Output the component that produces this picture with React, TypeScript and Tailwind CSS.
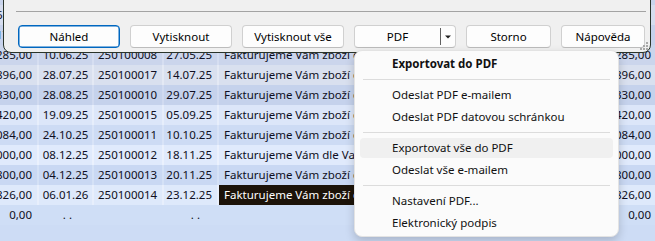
const rows = [
  { cell: '#c9d4ec', sep: '#d4ddf1', amt: '13 445,00', d1: '02.04.25', no: '250100005', d2: '19.03.25', text: 'Fakturujeme Vám zboží dle', r: '445,00' },
  { cell: '#d6ddee', sep: '#e2e8f4', amt: '23 610,00', d1: '06.05.25', no: '250100006', d2: '22.04.25', text: 'Fakturujeme Vám zboží dle', r: '610,00' },
  { cell: '#c7d2ec', sep: '#d2dbf0', amt: '43 173,00', d1: '30.05.25', no: '250100007', d2: '16.05.25', text: 'Fakturujeme Vám zboží dle', r: '173,00' },
  { cell: '#cbd5ec', sep: '#d6def1', amt: '12 285,00', d1: '10.06.25', no: '250100008', d2: '27.05.25', text: 'Fakturujeme Vám zboží dle', r: '285,00' },
  { cell: '#d9e0ef', sep: '#e4e9f4', amt: '12 896,00', d1: '28.07.25', no: '250100017', d2: '14.07.25', text: 'Fakturujeme Vám zboží dle', r: '896,00' },
  { cell: '#c5d2ec', sep: '#d0daf0', amt: '3 330,00', d1: '28.08.25', no: '250100010', d2: '29.07.25', text: 'Fakturujeme Vám zboží dle', r: '330,00' },
  { cell: '#dce6f9', sep: '#e7eefb', amt: '5 420,00', d1: '19.09.25', no: '250100015', d2: '05.09.25', text: 'Fakturujeme Vám zboží dle', r: '420,00' },
  { cell: '#cddbf4', sep: '#d8e3f7', amt: '7 084,00', d1: '24.10.25', no: '250100011', d2: '10.10.25', text: 'Fakturujeme Vám zboží dle', r: '084,00' },
  { cell: '#e0eafc', sep: '#ebf1fd', amt: '9 000,00', d1: '08.12.25', no: '250100012', d2: '18.11.25', text: 'Fakturujeme Vám dle Vaší objednávky', r: '000,00' },
  { cell: '#c9d8f3', sep: '#d4e1f6', amt: '4 800,00', d1: '04.12.25', no: '250100013', d2: '20.11.25', text: 'Fakturujeme Vám zboží dle', r: '800,00' },
  { cell: '#dee9fb', sep: '#e8effc', amt: '6 826,00', d1: '06.01.26', no: '250100014', d2: '23.12.25', text: 'Fakturujeme Vám zboží dle', r: '826,00', selected: true },
]

const buttons = [
  { label: 'Náhled', w: 'w-[102px]', focus: true },
  { label: 'Vytisknout', w: 'w-[102px]' },
  { label: 'Vytisknout vše', w: 'w-[102px]' },
]

function Sep() {
  return <div className="mx-2 my-1 h-px bg-[#dcdcdc]" />
}

function Item({ children, bold, hover }: { children: string; bold?: boolean; hover?: boolean }) {
  return (
    <div className="h-[22px] px-[5px] py-px">
      <div
        className={
          'h-[20px] rounded-[4px] pl-[32px] flex items-center ' +
          (hover ? 'bg-[#f0f0f0] ' : '') +
          (bold ? 'font-bold' : '')
        }
      >
        {children}
      </div>
    </div>
  )
}

export default function App() {
  return (
    <div className="relative w-[655px] h-[241px] overflow-hidden bg-[#cddcf5] font-['Noto_Sans',sans-serif] text-[11.5px] text-[#0f0f22]">
      {/* table behind */}
      <div className="flex flex-col mt-[-15px]">
        {rows.map((r, i) => (
          <div key={i} className="flex h-[20px] gap-[2px]" style={{ backgroundColor: r.sep }}>
            <div className="w-[37px] flex justify-end items-center overflow-hidden pr-[5px] whitespace-nowrap" style={{ backgroundColor: r.cell }}>
              {r.amt}
            </div>
            <div className="w-[53px] flex justify-center items-center whitespace-nowrap" style={{ backgroundColor: r.cell }}>
              {r.d1}
            </div>
            <div className="w-[68px] flex items-center pl-[4px] whitespace-nowrap" style={{ backgroundColor: r.cell }}>
              {r.no}
            </div>
            <div className="w-[53px] flex justify-end items-center pr-[5px] whitespace-nowrap" style={{ backgroundColor: r.cell }}>
              {r.d2}
            </div>
            <div
              className={'flex-1 flex items-center pl-[5px] whitespace-nowrap overflow-hidden ' + (r.selected ? 'bg-[#1c1309] text-white' : '')}
              style={{ backgroundColor: r.selected ? undefined : r.cell }}
            >
              {r.text}
            </div>
            <div className="w-[60px] flex justify-end items-center pr-[4px] whitespace-nowrap" style={{ backgroundColor: r.cell }}>
              {r.r}
            </div>
          </div>
        ))}
        {/* totals row */}
        <div className="flex h-[20px] bg-[#cfdef6]">
          <div className="w-[37px] flex justify-end items-center pr-[5px]">0,00</div>
          <div className="w-[35px] flex justify-end items-center">. .</div>
          <div className="w-[128px] flex justify-end items-center">. .</div>
          <div className="flex-1" />
          <div className="w-[60px] flex justify-end items-center pr-[4px]">0,00</div>
        </div>
      </div>

      {/* dialog */}
      <div className="absolute left-[3px] top-[-20px] w-[648px] h-[73px] bg-[#f0f0f0] border border-[#2a342a] rounded-b-[8px] flex flex-col">
        <div className="h-[30px]" />
        <div className="ml-[12px] mr-[4px] h-px bg-[#a3a3a3]" />
        <div className="mt-[13px] pl-[14px] flex gap-[10px] text-black">
          {buttons.map((b) => (
            <div
              key={b.label}
              className={
                b.w +
                ' h-[23px] rounded-[4px] flex items-center justify-center bg-[#fdfdfd] ' +
                (b.focus ? 'border border-[#0067c0] shadow-[inset_0_0_0_0.5px_#0067c0]' : 'border border-[#d0d0d0] border-b-[#bcbcbc]')
              }
            >
              {b.label}
            </div>
          ))}
          <div className="w-[102px] h-[23px] rounded-[4px] flex items-center bg-[#fdfdfd] border border-[#d0d0d0] border-b-[#bcbcbc]">
            <div className="flex-1 flex justify-center">PDF</div>
            <div className="w-px h-[17px] bg-[#606060]" />
            <div className="w-[14px] flex justify-center">
              <svg width="6" height="4" viewBox="0 0 6 4">
                <path d="M0 0.5h6L3 3.5z" fill="#202020" />
              </svg>
            </div>
          </div>
          <div className="w-[85px] h-[23px] rounded-[4px] flex items-center justify-center bg-[#fdfdfd] border border-[#d0d0d0] border-b-[#bcbcbc]">
            Storno
          </div>
          <div className="w-[84px] h-[23px] rounded-[4px] flex items-center justify-center bg-[#fdfdfd] border border-[#d0d0d0] border-b-[#bcbcbc]">
            Nápověda
          </div>
        </div>
        <svg className="absolute right-[1px] bottom-[1px]" width="10" height="10" viewBox="0 0 10 10">
          <rect x="7" y="1" width="2" height="2" fill="#a8a8a8" />
          <rect x="4" y="4" width="2" height="2" fill="#a8a8a8" />
          <rect x="7" y="4" width="2" height="2" fill="#a8a8a8" />
          <rect x="1" y="7" width="2" height="2" fill="#a8a8a8" />
          <rect x="4" y="7" width="2" height="2" fill="#a8a8a8" />
          <rect x="7" y="7" width="2" height="2" fill="#a8a8a8" />
        </svg>
      </div>

      {/* dropdown menu */}
      <div className="absolute left-[354px] top-[50px] w-[265px] py-[2px] bg-[#fbfbfb] border border-[#e3e3e3] rounded-[8px] shadow-[0_4px_10px_rgba(0,0,0,0.18)] text-[#111]">
        <Item bold>Exportovat do PDF</Item>
        <Sep />
        <Item>Odeslat PDF e-mailem</Item>
        <Item>Odeslat PDF datovou schránkou</Item>
        <Sep />
        <Item hover>Exportovat vše do PDF</Item>
        <Item>Odeslat vše e-mailem</Item>
        <Sep />
        <Item>Nastavení PDF...</Item>
        <Item>Elektronický podpis</Item>
      </div>
    </div>
  )
}
